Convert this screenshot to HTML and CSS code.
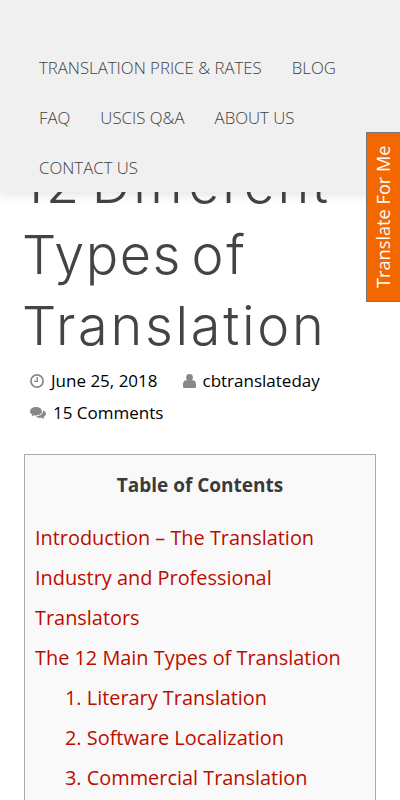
FILE: index.html
```html
<!DOCTYPE html>
<html lang="en">
<head>
<meta charset="utf-8">
<title>12 Different Types of Translation</title>
<link rel="stylesheet" href="styles.css">
</head>
<body>
<header class="site-header">
  <nav class="nav">
    <a href="#">Translation Price &amp; Rates</a>
    <a href="#">Blog</a>
    <a href="#">FAQ</a>
    <a href="#">USCIS Q&amp;A</a>
    <a href="#">About Us</a>
    <a href="#">Contact Us</a>
  </nav>
</header>
<a class="side-tab" href="#">Translate For Me</a>
<main class="article">
  <h1 class="title">12 Different <span class="tight">Types</span> of Translation</h1>
  <div class="meta">
    <span class="meta-item">
      <svg class="icon" viewBox="0 0 14 14"><circle cx="7" cy="7" r="6.100" fill="none" stroke="#888" stroke-width="1.700"/><path d="M7.300 3v4.400H4" fill="none" stroke="#888" stroke-width="1.400"/></svg>
      June 25, 2018</span>
    <span class="meta-item">
      <svg class="icon icon-user" viewBox="0 0 13 14"><circle cx="6.500" cy="3.400" r="3.400" fill="#888"/><path d="M0 12.400V10c0-2.200 1.400-3.800 3.200-3.800h6.600c1.800 0 3.200 1.600 3.200 3.800v2.400c0 1-.7 1.600-1.600 1.600H1.600C.7 14 0 13.400 0 12.400z" fill="#888"/></svg>
      cbtranslateday</span>
    <span class="meta-item">
      <svg class="icon icon-wide" viewBox="0 0 16 12"><path d="M6 0C2.700 0 0 1.900 0 4.300c0 1.400.9 2.600 2.300 3.400L1.500 9.600l2.600-1.300c.6.100 1.300.2 1.900.2 3.300 0 6-1.900 6-4.200S9.300 0 6 0z" fill="#888"/><path d="M13.200 3.300c.1 3.100-2.900 5.900-7.400 6.200 1 .9 2.500 1.400 4.100 1.400.5 0 1 0 1.500-.1L14.200 12l-.7-2c1.500-.8 2.500-2 2.500-3.300 0-1.400-1.100-2.600-2.800-3.400z" fill="#888"/></svg>
      15 Comments</span>
  </div>
  <section class="toc">
    <p class="toc-title">Table of Contents</p>
    <ul class="toc-list">
      <li><a href="#">Introduction – The Translation Industry and Professional Translators</a></li>
      <li><a href="#">The 12 Main Types of Translation</a>
        <ul class="toc-sub">
          <li><a href="#">1. Literary Translation</a></li>
          <li><a href="#">2. Software Localization</a></li>
          <li><a href="#">3. Commercial Translation</a></li>
        </ul>
      </li>
    </ul>
  </section>
</main>
</body>
</html>
```
FILE: styles.css
```css
html, body { margin: 0; padding: 0; }
body { font-family: "Open Sans", sans-serif; color: #000; background: #fff; overflow: hidden; height: 800px; }
a { text-decoration: none; }
.site-header {
  position: absolute; top: 0; left: 0; right: 0; height: 192px;
  background: #f0f0f0; box-shadow: 0 2px 12px rgba(0,0,0,.12); z-index: 2;
}
.nav { display: flex; flex-wrap: wrap; padding: 43px 24px 0; }
.nav a {
  color: #3f3f3f; font-size: 16.800px; font-weight: 300; line-height: 50px;
  padding: 0 15px; text-transform: uppercase;
}
.side-tab {
  position: absolute; top: 132px; right: 0; width: 33px; height: 168px;
  background: #f26700; border: 1px solid #777; border-left: 0;
  color: #fff; font-size: 18.200px; line-height: 33px; text-align: center;
  writing-mode: vertical-rl; transform: rotate(180deg); z-index: 3;
}
.article { padding: 148px 24px 0; }
.title {
  margin: 0 0 0 -2px; font-family: Inter, sans-serif; font-weight: 300; font-size: 54px;
  letter-spacing: 2.700px; word-spacing: -8px; line-height: 71px; color: #444;
}
.tight { letter-spacing: 1.400px; }
.meta { display: flex; flex-wrap: wrap; column-gap: 25px; padding: 4px 6px 0; font-size: 17px; line-height: 32px; }
.meta-item { display: flex; align-items: center; gap: 7px; }
.icon { width: 14px; height: 14px; }
.icon-user { width: 13px; }
.icon-wide { width: 16px; height: 12px; }
.toc { margin-top: 25px; padding: 11px 10px; border: 1px solid #aaa; background: #f9f9f9; }
.toc-title { margin: 0 0 14px; font-size: 19px; font-weight: 700; line-height: 38px; text-align: center; color: #3a3a3a; }
.toc-list, .toc-sub { list-style: none; margin: 0; padding: 0; font-size: 19.900px; line-height: 40px; }
.toc-sub { padding-left: 30px; }
.toc a { color: #bb0d00; }
```
